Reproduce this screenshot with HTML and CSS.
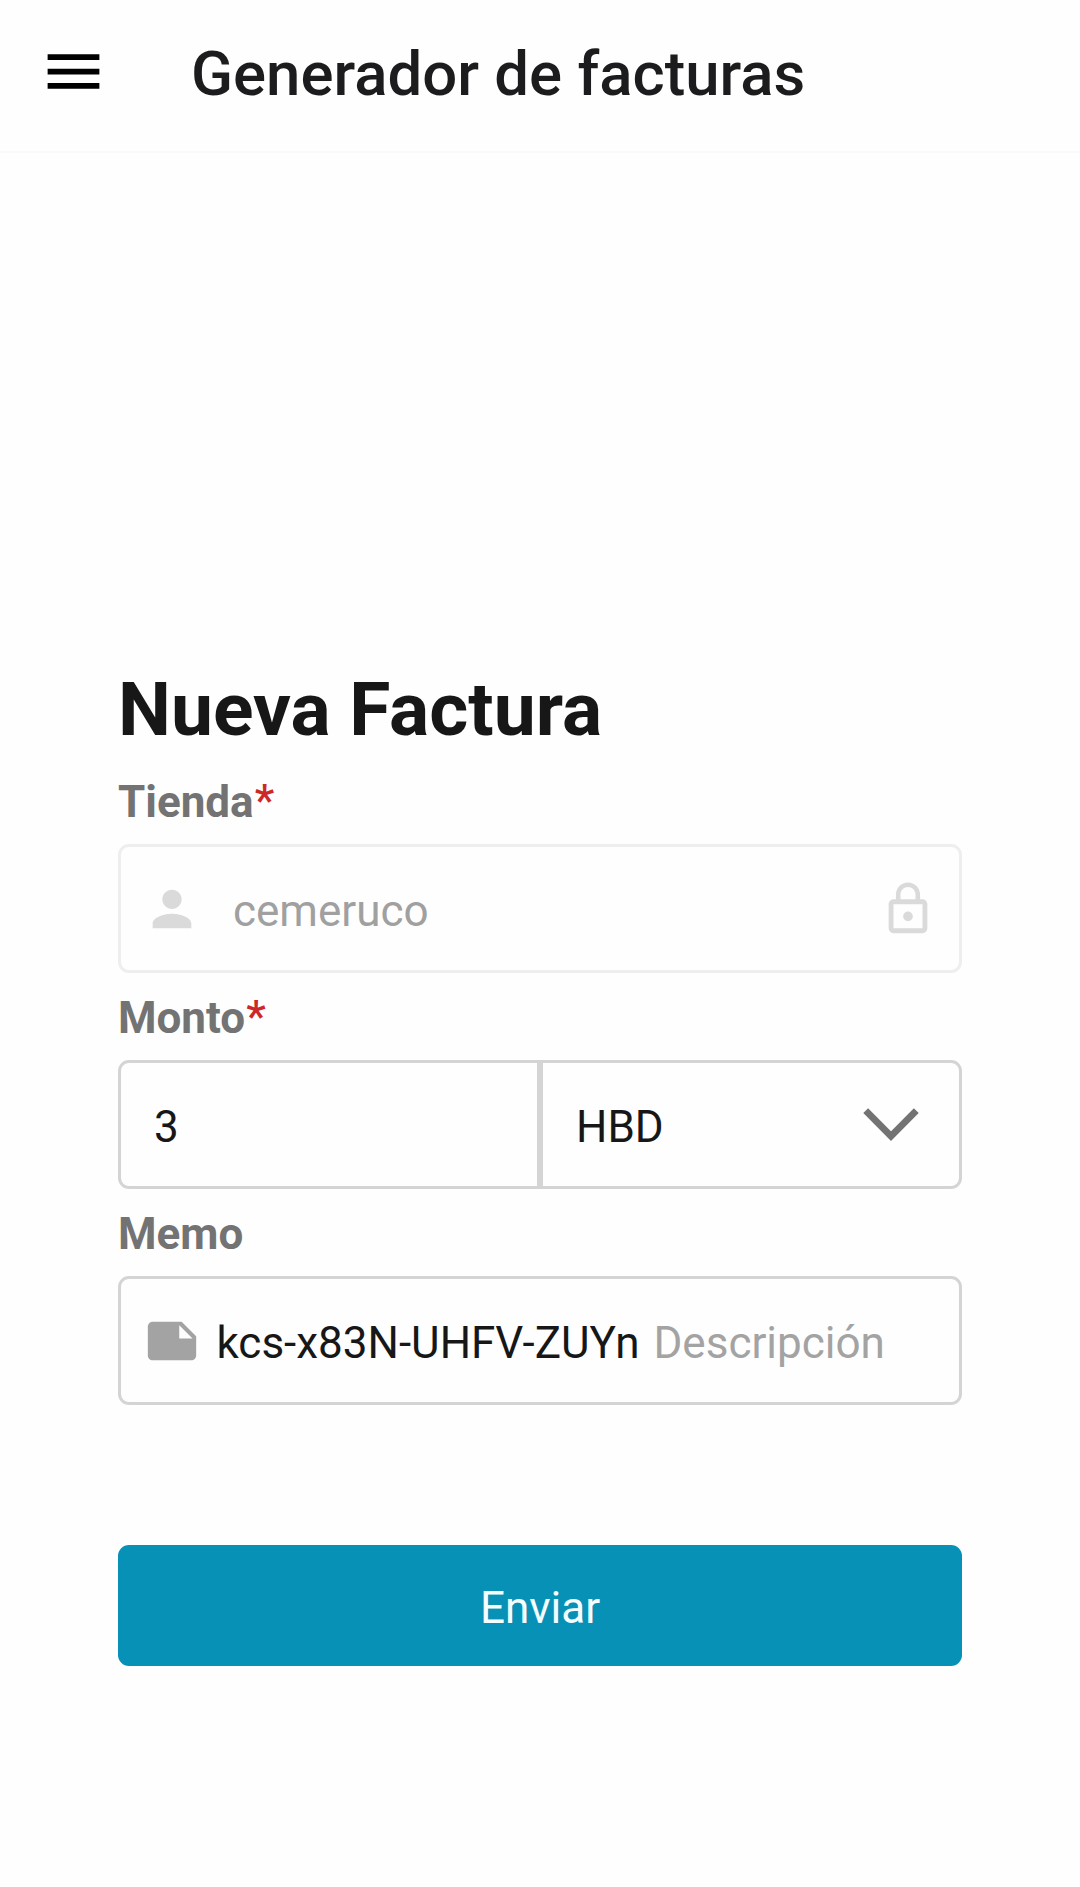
FILE: index.html
```html
<!DOCTYPE html>
<html lang="es">
<head>
  <meta charset="UTF-8" />
  <meta name="viewport" content="width=device-width, initial-scale=1.0" />
  <title>Generador de facturas</title>
  <link rel="stylesheet" href="styles.css">
</head>
<body>
  <header>
    <svg class="menu-icon" viewBox="0 0 24 24"><path d="M3 18h18v-2H3v2zm0-5h18v-2H3v2zm0-7v2h18V6H3z"/></svg>
    <h1>Generador de facturas</h1>
  </header>

  <main>
    <h2>Nueva Factura</h2>

    <div class="label">Tienda<span class="required">*</span></div>
    <div class="field disabled">
      <svg class="icon" viewBox="0 0 24 24"><path d="M12 12c2.21 0 4-1.79 4-4s-1.79-4-4-4-4 1.79-4 4 1.79 4 4 4zm0 2c-2.67 0-8 1.34-8 4v2h16v-2c0-2.66-5.33-4-8-4z"/></svg>
      <span class="value store">cemeruco</span>
      <svg class="icon" viewBox="0 0 24 24"><path d="M12 17c1.1 0 2-.9 2-2s-.9-2-2-2-2 .9-2 2 .9 2 2 2zm6-9h-1V6c0-2.76-2.24-5-5-5S7 3.24 7 6v2H6c-1.1 0-2 .9-2 2v10c0 1.1.9 2 2 2h12c1.1 0 2-.9 2-2V10c0-1.1-.9-2-2-2zM8.9 6c0-1.71 1.39-3.1 3.1-3.1s3.1 1.39 3.1 3.1v2H8.9V6zM18 20H6V10h12v10z"/></svg>
    </div>

    <div class="label">Monto<span class="required">*</span></div>
    <div class="amount-row">
      <div class="field amount"><span class="value">3</span></div>
      <div class="field currency">
        <span class="value">HBD</span>
        <svg class="chevron" viewBox="0 0 56 34"><path d="M2.7 2.7L28 28.2L53.3 2.7"/></svg>
      </div>
    </div>

    <div class="label">Memo</div>
    <div class="field">
      <svg class="icon" viewBox="0 0 24 24"><path d="M22 10l-6-6H4c-1.1 0-2 .9-2 2v12.01c0 1.1.9 1.99 2 1.99l16-.01c1.1 0 2-.89 2-1.99v-8zm-7-4.5l5.5 5.5H15V5.5z"/></svg>
      <span class="value memo">kcs-x83N-UHFV-ZUYn</span>
      <span class="value placeholder">Descripción</span>
    </div>

    <button class="send-btn">Enviar</button>
  </main>
</body>
</html>
```
FILE: styles.css
```css
* {
  box-sizing: border-box;
}
body {
  margin: 0;
  min-height: 100vh;
  font-family: Roboto, sans-serif;
  font-size: 44px;
  background-color: #fefefe;
  color: #171717;
}
svg {
  display: block;
  flex: none;
}
header {
  display: flex;
  align-items: center;
  height: 153px;
  padding: 0 39px 4px;
  background-color: #fefefe;
  border-bottom: 2px solid #fafafa;
}
.menu-icon {
  width: 69px;
  height: 69px;
  margin: 0 83px 4px 0;
  fill: #000;
}
h1 {
  margin: 0;
  font-size: 61.7px;
  font-weight: 500;
  line-height: 80px;
  color: #1c1c1e;
}
main {
  width: 844px;
  margin: 0 auto;
  padding-top: 511px;
}
h2 {
  margin: 0 0 22px;
  font-size: 75px;
  font-weight: 700;
  line-height: 90px;
}
.label {
  height: 52px;
  margin-bottom: 16px;
  line-height: 52px;
  font-weight: 700;
  color: #737373;
}
.required {
  margin-left: 1px;
  font-weight: 500;
  line-height: 1;
  vertical-align: 1px;
  color: #cc2828;
}
.field {
  display: flex;
  align-items: center;
  height: 129px;
  margin-bottom: 19px;
  padding: 0 22px;
  border: 3px solid #d4d4d4;
  border-radius: 11px;
}
.value {
  padding-top: 4px;
  line-height: 52px;
}
.icon {
  width: 58px;
  height: 58px;
  fill: #a3a3a3;
}
.disabled {
  border-color: #eee;
  color: #a0a0a0;
}
.disabled .icon {
  fill: #dadada;
}
.store {
  flex: 1;
  margin-left: 32px;
}
.amount-row {
  display: flex;
}
.amount-row .field {
  width: 50%;
  padding: 0 33px;
}
.amount-row .amount {
  border-radius: 11px 0 0 11px;
}
.amount-row .currency {
  justify-content: space-between;
  padding-right: 40px;
  border-radius: 0 11px 11px 0;
}
.chevron {
  width: 56px;
  height: 34px;
  fill: none;
  stroke: #737373;
  stroke-width: 6.8;
}
.memo {
  margin: 0 14px 0 15.5px;
}
.placeholder {
  color: #a3a3a3;
}
.send-btn {
  display: block;
  width: 100%;
  height: 121px;
  margin-top: 140px;
  padding: 4px 0 0;
  border: none;
  border-radius: 11px;
  background-color: #0891b6;
  color: #f5fdff;
  font-family: inherit;
  font-size: 44px;
}
```
